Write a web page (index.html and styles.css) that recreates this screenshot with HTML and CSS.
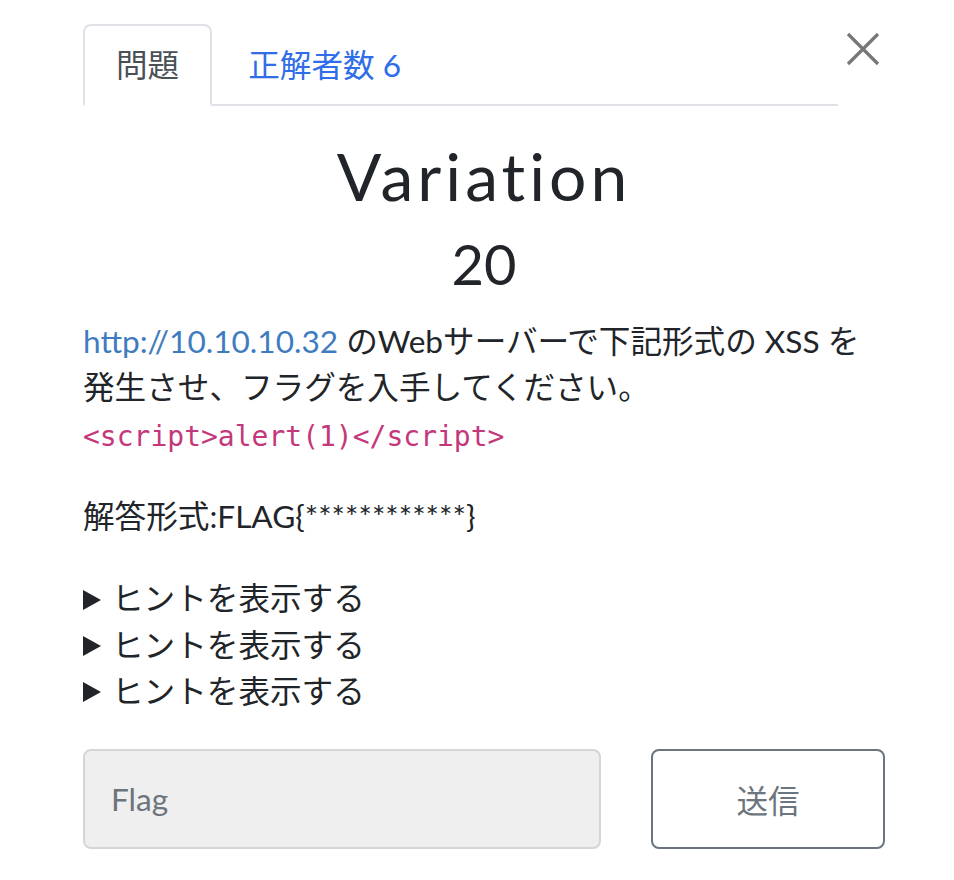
FILE: index.html
```html
<!DOCTYPE html>
<html lang="ja">
<head>
<meta charset="utf-8">
<title>Variation</title>
<link rel="stylesheet" href="styles.css">
</head>
<body>
<div class="modal">
  <div class="header">
    <ul class="tabs">
      <li class="tab active">問題</li>
      <li class="tab link">正解者数 6</li>
    </ul>
    <button class="close" aria-label="閉じる">
      <svg width="34" height="34" viewBox="0 0 34 34"><path d="M2 2 L32 32 M32 2 L2 32" stroke="#777" stroke-width="3.2" fill="none"/></svg>
    </button>
  </div>
  <h2 class="name">Variation</h2>
  <h3 class="value">20</h3>
  <div class="desc">
    <p><a class="url" href="#">http://10.10.10.32</a> のWebサーバーで下記形式の XSS を<br>発生させ、フラグを入手してください。<br><code>&lt;script&gt;alert(1)&lt;/script&gt;</code></p>
    <p>解答形式:FLAG{************}</p>
    <details><summary>ヒントを表示する</summary></details>
    <details><summary>ヒントを表示する</summary></details>
    <details><summary>ヒントを表示する</summary></details>
  </div>
  <div class="submit">
    <input class="flag" type="text" placeholder="Flag">
    <button class="send">送信</button>
  </div>
</div>
</body>
</html>
```
FILE: styles.css
```css
html, body {
  margin: 0;
  padding: 0;
  background: #fff;
}
body {
  font-family: Lato, "Noto Sans CJK JP", sans-serif;
  font-size: 31.6px;
  line-height: 46.4px;
  color: #212529;
}
.modal {
  margin-left: 83px;
  width: 802px;
  padding-top: 24px;
}
.header {
  display: flex;
  align-items: flex-start;
}
.tabs {
  flex: 1;
  display: flex;
  list-style: none;
  margin: 0;
  padding: 0;
  border-bottom: 2px solid #dee2e6;
}
.tab {
  padding: 16px 31px 16px;
  margin-bottom: -2px;
  border: 2px solid transparent;
  border-radius: 8px 8px 0 0;
}
.tab.active {
  color: #495057;
  border-color: #dee2e6 #dee2e6 #fff;
  background: #fff;
}
.tab.link {
  color: #2f6ee8;
  padding-left: 34px;
}
.close {
  width: 47px;
  height: 60px;
  padding: 8px 0 0 8px;
  border: 0;
  background: none;
  display: flex;
  align-items: flex-start;
  justify-content: flex-start;
}
.name {
  margin: 30px 0 0;
  text-align: center;
  font-weight: 400;
  font-size: 66px;
  line-height: 1.2;
  letter-spacing: 4px;
}
.value {
  margin: 14px 0 21px;
  text-align: center;
  font-weight: 400;
  font-size: 56px;
  line-height: 1.2;
}
.desc p {
  margin: 0 0 36px;
}
.url {
  color: #3f7cbf;
  text-decoration: none;
}
code {
  font-family: "DejaVu Sans Mono", monospace;
  font-size: 28px;
  color: #c4387b;
  line-height: 1;
}
details summary {
  cursor: pointer;
  list-style: none;
  display: flex;
  align-items: center;
}
details summary::-webkit-details-marker {
  display: none;
}
details summary::before {
  content: "";
  width: 0;
  height: 0;
  border-left: 18px solid #212529;
  border-top: 10px solid transparent;
  border-bottom: 10px solid transparent;
  margin-right: 11px;
  margin-top: 2px;
}
.submit {
  display: flex;
  gap: 50px;
  margin-top: 34px;
}
.flag {
  width: 518px;
  height: 100px;
  box-sizing: border-box;
  border: 2px solid #d3d6d9;
  border-radius: 8px;
  background: #efefef;
  padding: 0 26px;
  font-family: Lato, sans-serif;
  font-size: 31.6px;
  color: #495057;
}
.flag::placeholder {
  color: #6c757d;
}
.send {
  width: 234px;
  height: 100px;
  box-sizing: border-box;
  border: 2px solid #6c757d;
  border-radius: 8px;
  background: #fff;
  color: #6c757d;
  font-family: Lato, "Noto Sans CJK JP", sans-serif;
  font-size: 31.6px;
}
```
